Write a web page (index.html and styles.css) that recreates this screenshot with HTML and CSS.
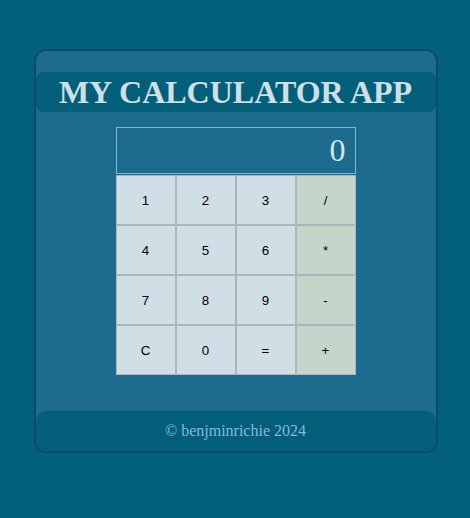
FILE: index.html
```html
<!DOCTYPE html>
<html>
<head>
<meta charset="utf-8">
<title>My Calculator App</title>
<link rel="stylesheet" href="styles.css">
</head>
<body>
<div class="app">
  <h1 class="title">MY CALCULATOR APP</h1>
  <div class="calc">
    <div class="display">0</div>
    <div class="keys">
      <button class="key">1</button>
      <button class="key">2</button>
      <button class="key">3</button>
      <button class="key op">/</button>
      <button class="key">4</button>
      <button class="key">5</button>
      <button class="key">6</button>
      <button class="key op">*</button>
      <button class="key">7</button>
      <button class="key">8</button>
      <button class="key">9</button>
      <button class="key op">-</button>
      <button class="key">C</button>
      <button class="key">0</button>
      <button class="key">=</button>
      <button class="key op">+</button>
    </div>
  </div>
  <footer class="footer">© benjminrichie 2024</footer>
</div>
</body>
</html>
```

FILE: styles.css
```css
html, body {
  margin: 0;
  padding: 0;
  background: #02607a;
}
body {
  font-family: "Liberation Serif", serif;
  padding-top: 49px;
  padding-left: 1px;
}
.app {
  width: 400px;
  height: 400px;
  margin: 0 auto;
  border: 2px solid #0b4b6b;
  border-radius: 12px;
  background: #1d6b8f;
  display: flex;
  flex-direction: column;
  align-items: center;
}
.title {
  align-self: stretch;
  margin: 21px 0 0;
  height: 40px;
  line-height: 40px;
  background: #035e7a;
  border-radius: 8px;
  color: #cde0e6;
  font-size: 32px;
  font-weight: bold;
  text-align: center;
}
.calc {
  width: 240px;
  margin-top: 15px;
}
.display {
  height: 45px;
  border: 1px solid #79b6dc;
  color: #d3e6ee;
  font-size: 32px;
  line-height: 45px;
  text-align: right;
  padding-right: 9px;
}
.keys {
  margin-top: 1px;
  display: grid;
  grid-template-columns: repeat(4, 60px);
  grid-auto-rows: 50px;
}
.key {
  margin: 0;
  padding: 0;
  border: 1px solid #a8b7bd;
  background: #cfdfe5;
  color: #000;
  font-family: "Liberation Sans", Arial, sans-serif;
  font-size: 13.33px;
}
.key.op {
  background: #c5d5cc;
}
.footer {
  align-self: stretch;
  margin-top: auto;
  height: 40px;
  line-height: 40px;
  background: #035e7a;
  border-radius: 10px;
  color: #80bcd9;
  font-size: 16px;
  text-align: center;
}
```
